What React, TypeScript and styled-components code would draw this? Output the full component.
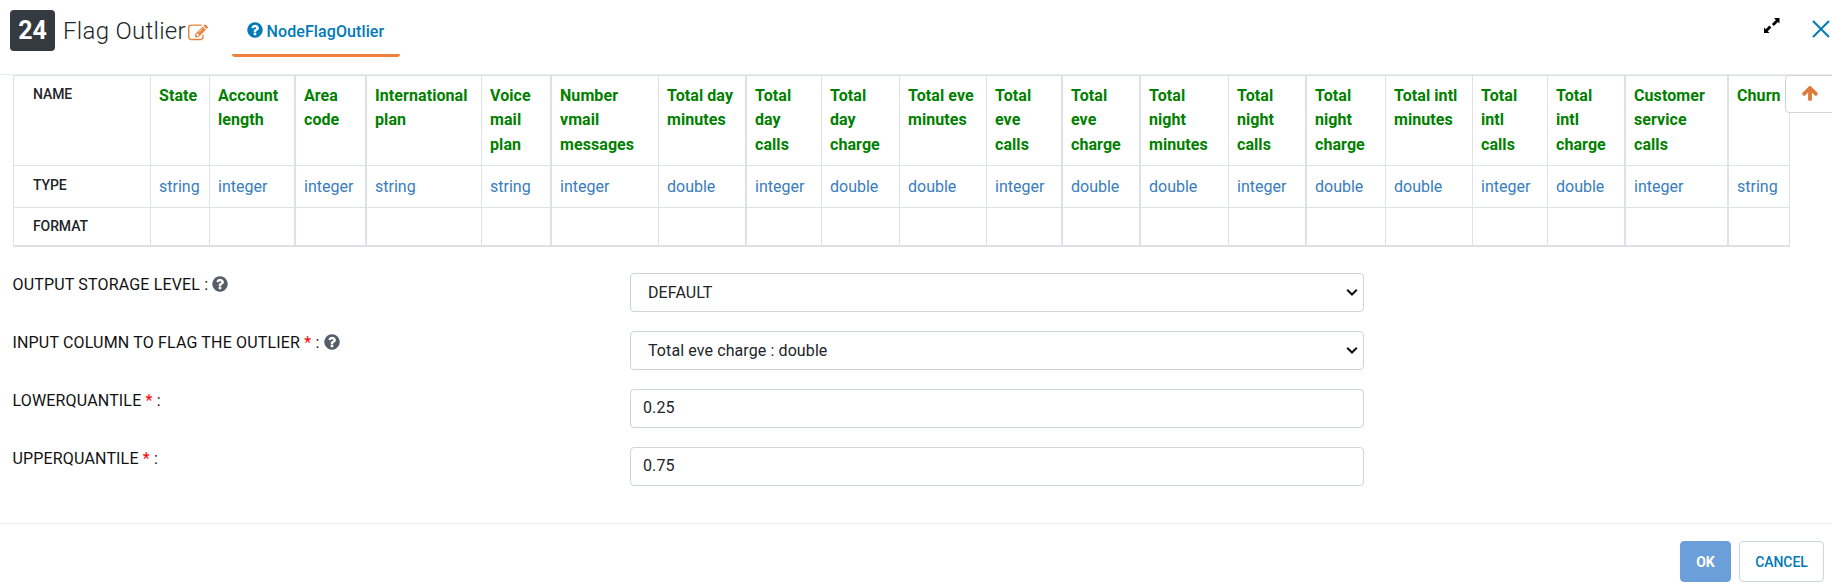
import React from "react";
import styled, { createGlobalStyle, css } from "styled-components";

const GlobalStyle = createGlobalStyle`
  *, *::before, *::after { box-sizing: border-box; }
  body {
    margin: 0;
    background: #fff;
    color: #212529;
    font-family: Roboto, "Liberation Sans", sans-serif;
    font-size: 16px;
    overflow: hidden;
  }
`;

const Dialog = styled.div`
  display: flex;
  flex-direction: column;
  width: 1832px;
  height: 587px;
  overflow: hidden;
`;

const Header = styled.header`
  display: flex;
  align-items: flex-start;
  flex: none;
  height: 75px;
  padding: 10px 2px 0 10px;
  border-bottom: 1px solid #e9ecef;
`;

const Badge = styled.span`
  width: 45px;
  height: 41px;
  border-radius: 4px;
  background: #343a40;
  color: #fff;
  font-size: 25px;
  font-weight: 700;
  line-height: 42px;
  text-align: center;
`;

const Title = styled.h1`
  width: 125px;
  margin: 0 0 0 8px;
  font-size: 24px;
  font-weight: 300;
  letter-spacing: 0.3px;
  line-height: 43px;
  white-space: nowrap;
`;

const EditIcon = styled.svg`
  width: 20px;
  height: 20px;
  margin-top: 13px;
  fill: #e8833f;
`;

const Tab = styled.a`
  display: flex;
  align-items: flex-start;
  gap: 2.5px;
  width: 168px;
  height: 47px;
  margin-left: 24px;
  padding: 11px 0 0 14px;
  border-bottom: 3px solid #f0803c;
  border-radius: 0 0 3px 3px;
  color: #007ab8;
  font-weight: 500;
  letter-spacing: 0.1px;
  line-height: 22px;
`;

const HelpSvg = styled.svg<{ $tone: string }>`
  flex: none;
  width: 18px;
  height: 18px;
  fill: ${(p) => p.$tone};
`;

const HeaderActions = styled.div`
  display: flex;
  gap: 31px;
  margin-left: auto;
  padding-top: 7px;
`;

const Body = styled.main`
  position: relative;
  flex: none;
  height: 448px;
  padding-left: 13px;
`;

const Schema = styled.table`
  width: 1777px;
  table-layout: fixed;
  border-collapse: separate;
  border-spacing: 0;
  border: solid #dee2e6;
  border-width: 1px 0 0 1px;
`;

const Row = styled.tr<{ $height: number }>`
  height: ${(p) => p.$height}px;
`;

const cell = css<{ $thick?: boolean; $last?: boolean }>`
  padding: 7.8px 0 0 8px;
  border: solid #dee2e6;
  border-width: 0 ${(p) => (p.$thick ? 2 : 1)}px ${(p) => (p.$last ? 2 : 1)}px 0;
  text-align: left;
  vertical-align: top;
  line-height: 24.5px;
`;

const RowTitle = styled.th<{ $last?: boolean; $top?: number }>`
  ${cell}
  padding-left: 19px;
  padding-top: ${(p) => p.$top ?? 6}px;
  font-size: 14px;
  font-weight: 500;
  letter-spacing: -0.1px;
`;

const ColumnName = styled.th<{ $thick?: boolean }>`
  ${cell}
  color: #008000;
  font-weight: 700;
  letter-spacing: 0.08px;
`;

const ColumnType = styled.td<{ $thick?: boolean; $last?: boolean }>`
  ${cell}
  padding-top: 9px;
  color: #377dbd;
`;

const ScrollTop = styled.button`
  position: absolute;
  top: 0;
  right: -1px;
  display: flex;
  align-items: flex-start;
  width: 48px;
  height: 38px;
  padding: 7.5px 0 0 15px;
  border: 1px solid #ced4da;
  border-radius: 4px 0 0 4px;
  background: #fff;
`;

const Form = styled.form`
  display: flex;
  flex-direction: column;
  gap: 19px;
  padding-top: 26px;
`;

const Field = styled.div`
  display: grid;
  grid-template-columns: 617px 734px;
  height: 39px;
`;

const Label = styled.label`
  display: flex;
  align-items: center;
  gap: 3px;
  height: 22px;
  margin-left: -0.5px;
  color: #111;
  letter-spacing: 0.17px;
  white-space: pre;
`;

const Required = styled.span`
  color: #f00;
`;

const control = css`
  width: 734px;
  height: 39px;
  border: 1px solid #ced4da;
  border-radius: 4px;
  background: #fff;
  color: #212529;
  font: 400 16px Roboto, "Liberation Sans", sans-serif;
  letter-spacing: 0.1px;
`;

const SelectBox = styled.div`
  position: relative;
`;

const NativeSelect = styled.select`
  ${control}
  appearance: none;
  padding: 6px 17px;
`;

const Chevron = styled.svg`
  position: absolute;
  right: 6px;
  top: 15px;
  width: 12px;
  height: 9px;
  pointer-events: none;
`;

const Input = styled.input`
  ${control}
  padding: 6px 12px 8px;
`;

const Footer = styled.footer`
  display: flex;
  justify-content: flex-end;
  gap: 8px;
  height: 64px;
  padding: 17px 8px 0 0;
  border-top: 1px solid #e9ecef;
`;

const Button = styled.button<{ $primary?: boolean }>`
  width: ${(p) => (p.$primary ? 51 : 85)}px;
  height: 41px;
  padding: 0;
  border: 1px solid ${(p) => (p.$primary ? "#6a9fd9" : "#ced4da")};
  border-radius: 4px;
  background: ${(p) => (p.$primary ? "#6a9fd9" : "#fff")};
  color: ${(p) => (p.$primary ? "#fff" : "#007ab8")};
  font: ${(p) => (p.$primary ? 700 : 500)} 14px Roboto, "Liberation Sans", sans-serif;
  letter-spacing: -0.1px;
`;

const HelpIcon = ({ tone }: { tone: string }) => (
  <HelpSvg $tone={tone} viewBox="0 0 1792 1792">
    <path d="M1024 1376v-192q0-14-9-23t-23-9h-192q-14 0-23 9t-9 23v192q0 14 9 23t23 9h192q14 0 23-9t9-23zm256-672q0-88-55.5-163t-138.5-116-170-41q-243 0-371 213-15 24 8 42l132 100q7 6 19 6 16 0 25-12 53-68 86-92 34-24 86-24 48 0 85.5 26t37.5 59q0 38-20 61t-68 45q-63 28-115.5 86.5t-52.5 125.5v36q0 14 9 23t23 9h192q14 0 23-9t9-23q0-19 21.5-49.5t54.5-49.5q32-18 49-28.5t46-35 44.5-48 28-60.5 12.5-81zm384 192q0 209-103 385.5t-279.5 279.5-385.5 103-385.5-103-279.5-279.5-103-385.5 103-385.5 279.5-279.5 385.5-103 385.5 103 279.5 279.5 103 385.5z" />
  </HelpSvg>
);

const Select = ({ value }: { value: string }) => (
  <SelectBox>
    <NativeSelect defaultValue={value}>
      <option value={value}>{value}</option>
    </NativeSelect>
    <Chevron viewBox="0 0 12 9">
      <path d="M1.200 1.800L6 6.500l4.800-4.700" stroke="#111" strokeWidth="2" fill="none" />
    </Chevron>
  </SelectBox>
);

type Column = { name: string[]; type: string; width: number; thick?: boolean };

const columns: Column[] = [
  { name: ["State"], type: "string", width: 59 },
  { name: ["Account", "length"], type: "integer", width: 86, thick: true },
  { name: ["Area", "code"], type: "integer", width: 71, thick: true },
  { name: ["International", "plan"], type: "string", width: 115 },
  { name: ["Voice", "mail", "plan"], type: "string", width: 70, thick: true },
  { name: ["Number", "vmail", "messages"], type: "integer", width: 107 },
  { name: ["Total day", "minutes"], type: "double", width: 88, thick: true },
  { name: ["Total", "day", "calls"], type: "integer", width: 75 },
  { name: ["Total", "day", "charge"], type: "double", width: 78 },
  { name: ["Total eve", "minutes"], type: "double", width: 87 },
  { name: ["Total", "eve", "calls"], type: "integer", width: 76, thick: true },
  { name: ["Total", "eve", "charge"], type: "double", width: 78, thick: true },
  { name: ["Total", "night", "minutes"], type: "double", width: 88 },
  { name: ["Total", "night", "calls"], type: "integer", width: 78, thick: true },
  { name: ["Total", "night", "charge"], type: "double", width: 79 },
  { name: ["Total intl", "minutes"], type: "double", width: 87 },
  { name: ["Total", "intl", "calls"], type: "integer", width: 75 },
  { name: ["Total", "intl", "charge"], type: "double", width: 78, thick: true },
  { name: ["Customer", "service", "calls"], type: "integer", width: 103, thick: true },
  { name: ["Churn"], type: "string", width: 61 },
];

export default function App() {
  return (
    <>
      <GlobalStyle />
      <Dialog>
        <Header>
          <Badge>24</Badge>
          <Title>Flag Outlier</Title>
          <EditIcon viewBox="0 0 1792 1792">
            <path d="M888 1184l116-116-152-152-116 116v56h96v96h56zm440-720q-16-16-33 1l-350 350q-17 17-1 33t33-1l350-350q17-17 1-33zm80 594v190q0 119-84.5 203.5t-203.5 84.5h-832q-119 0-203.5-84.5t-84.5-203.5v-832q0-119 84.5-203.5t203.5-84.5h832q63 0 117 25 15 7 18 23 3 17-9 29l-49 49q-14 14-32 8-23-6-45-6h-832q-66 0-113 47t-47 113v832q0 66 47 113t113 47h832q66 0 113-47t47-113v-126q0-13 9-22l64-64q15-15 35-7t20 29zm-96-738l288 288-672 672h-288v-288zm444 132l-92 92-288-288 92-92q28-28 68-28t68 28l152 152q28 28 28 68t-28 68z" />
          </EditIcon>
          <Tab>
            <HelpIcon tone="#007ab8" />
            NodeFlagOutlier
          </Tab>
          <HeaderActions>
            <svg width="18" height="18" viewBox="0 0 18 18">
              <path d="M11 1h5.500v5.500l-1.600-1.600-4 4-2-2 4-4zM1 10.500l1.700 1.700 3.700-3.700 2 2-3.700 3.700L6.500 16H1z" fill="#000" />
            </svg>
            <svg width="18" height="24" viewBox="0 0 18 24">
              <path d="M1 4l16 16M17 4L1 20" stroke="#007ab8" strokeWidth="2" fill="none" />
            </svg>
          </HeaderActions>
        </Header>
        <Body>
          <Schema>
            <colgroup>
              <col style={{ width: 137 }} />
              {columns.map((c, i) => (
                <col key={i} style={{ width: c.width }} />
              ))}
            </colgroup>
            <tbody>
              <Row $height={90}>
                <RowTitle>NAME</RowTitle>
                {columns.map((c, i) => (
                  <ColumnName key={i} $thick={c.thick}>
                    {c.name.map((line) => (
                      <div key={line}>{line}</div>
                    ))}
                  </ColumnName>
                ))}
              </Row>
              <Row $height={42}>
                <RowTitle $top={7}>TYPE</RowTitle>
                {columns.map((c, i) => (
                  <ColumnType key={i} $thick={c.thick}>{c.type}</ColumnType>
                ))}
              </Row>
              <Row $height={39}>
                <RowTitle $last>FORMAT</RowTitle>
                {columns.map((c, i) => (
                  <ColumnType key={i} $thick={c.thick} $last />
                ))}
              </Row>
            </tbody>
          </Schema>
          <ScrollTop type="button">
            <svg width="18" height="18" viewBox="0 0 1792 1792">
              <path fill="#e07b3e" d="M1675 971q0 51-37 90l-75 75q-38 38-91 38-54 0-90-38l-294-293v704q0 52-37.5 84.5t-90.5 32.5h-128q-53 0-90.5-32.5t-37.5-84.5v-704l-294 293q-36 38-90 38t-90-38l-75-75q-38-38-38-90 0-53 38-91l651-651q35-37 90-37 54 0 91 37l651 651q37 39 37 91z" />
            </svg>
          </ScrollTop>
          <Form>
            <Field>
              <Label>OUTPUT STORAGE LEVEL :<HelpIcon tone="#555e68" /></Label>
              <Select value="DEFAULT" />
            </Field>
            <Field>
              <Label>
                <span>INPUT COLUMN TO FLAG THE OUTLIER <Required>*</Required> :</span>
                <HelpIcon tone="#555e68" />
              </Label>
              <Select value="Total eve charge : double" />
            </Field>
            <Field>
              <Label><span>LOWERQUANTILE <Required>*</Required> :</span></Label>
              <Input defaultValue="0.25" />
            </Field>
            <Field>
              <Label><span>UPPERQUANTILE <Required>*</Required> :</span></Label>
              <Input defaultValue="0.75" />
            </Field>
          </Form>
        </Body>
        <Footer>
          <Button type="button" $primary>OK</Button>
          <Button type="button">CANCEL</Button>
        </Footer>
      </Dialog>
    </>
  );
}
